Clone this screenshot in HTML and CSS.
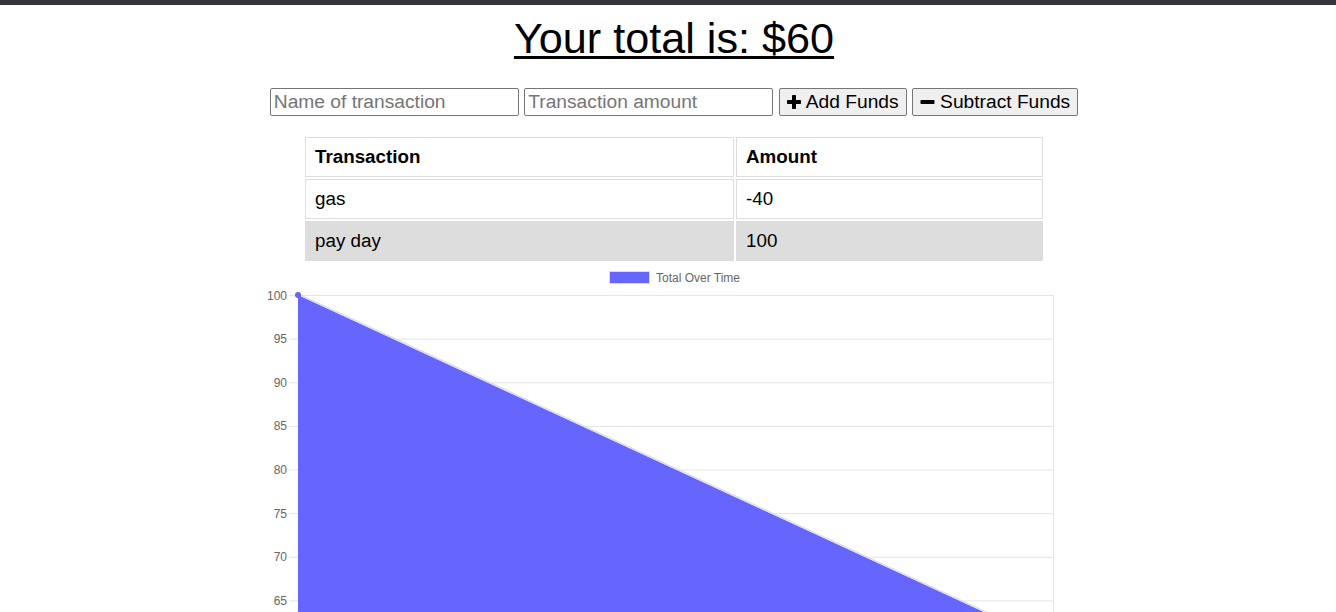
FILE: index.html
```html
<!DOCTYPE html>
<html lang="en">
<head>
<meta charset="utf-8">
<title>Budget Tracker</title>
<link rel="stylesheet" href="styles.css">
</head>
<body>
<div class="topbar"></div>
<main class="wrap">
  <h1 class="total">Your total is: $<span>60</span></h1>
  <form class="form">
    <input class="field" type="text" placeholder="Name of transaction">
    <input class="field" type="number" placeholder="Transaction amount">
    <button class="btn" type="button">
      <svg class="ico" viewBox="0 0 14 14" width="14" height="14"><rect x="5" y="0" width="4" height="14" rx="0.8"/><rect x="0" y="5" width="14" height="4" rx="0.8"/></svg>
      Add Funds
    </button>
    <button class="btn" type="button">
      <svg class="ico" viewBox="0 0 14 14" width="15" height="14"><rect x="0" y="5" width="14" height="4" rx="0.8"/></svg>
      Subtract Funds
    </button>
  </form>
  <table class="tx">
    <thead>
      <tr><th class="c1">Transaction</th><th class="c2">Amount</th></tr>
    </thead>
    <tbody>
      <tr><td>gas</td><td>-40</td></tr>
      <tr class="alt"><td>pay day</td><td>100</td></tr>
    </tbody>
  </table>
  <div class="chart">
    <svg width="820" height="420" viewBox="0 0 820 420" font-family="Liberation Sans, Arial, sans-serif" font-size="12" fill="#666">
      <rect x="359.5" y="5.5" width="40" height="12" fill="#6666ff" stroke="#dcdcf0" stroke-width="1"/>
      <text x="406" y="15.5">Total Over Time</text>
      <g stroke="#e5e5e5" stroke-width="1">
        <line x1="39" y1="29.5" x2="803" y2="29.5"/>
        <line x1="39" y1="73.1" x2="803" y2="73.1"/>
        <line x1="39" y1="116.8" x2="803" y2="116.8"/>
        <line x1="39" y1="160.4" x2="803" y2="160.4"/>
        <line x1="39" y1="204" x2="803" y2="204"/>
        <line x1="39" y1="247.6" x2="803" y2="247.6"/>
        <line x1="39" y1="291.3" x2="803" y2="291.3"/>
        <line x1="39" y1="334.9" x2="803" y2="334.9"/>
        <line x1="39" y1="378.5" x2="803" y2="378.5"/>
        <line x1="803.5" y1="29" x2="803.5" y2="420"/>
        <line x1="48.5" y1="29" x2="48.5" y2="420"/>
      </g>
      <g text-anchor="end">
        <text x="37" y="33.5">100</text>
        <text x="37" y="77.1">95</text>
        <text x="37" y="120.8">90</text>
        <text x="37" y="164.4">85</text>
        <text x="37" y="208">80</text>
        <text x="37" y="251.6">75</text>
        <text x="37" y="295.3">70</text>
        <text x="37" y="338.9">65</text>
      </g>
      <polygon points="48,29 803,378 803,420 48,420" fill="#6666ff"/>
      <line x1="48" y1="28" x2="803" y2="377" stroke="#dedee8" stroke-width="1.6"/>
      <circle cx="48" cy="29" r="3" fill="#6666ff"/>
    </svg>
  </div>
</main>
</body>
</html>
```

FILE: styles.css
```css
html, body {
  margin: 0;
  padding: 0;
  overflow: hidden;
  background: #fff;
}
body {
  font-family: "Liberation Sans", Arial, sans-serif;
  color: #000;
}
.topbar {
  height: 5px;
  background: #35363a;
}
.wrap {
  padding-left: 12px;
  display: flex;
  flex-direction: column;
  align-items: center;
}
.total {
  margin: 9px 0 0;
  font-size: 43.2px;
  font-weight: normal;
  line-height: 49px;
  text-decoration: underline;
  text-decoration-thickness: 3px;
  text-underline-offset: 3px;
}
.form {
  margin-top: 25px;
  margin-left: 0;
  display: flex;
  gap: 5.5px;
  align-items: center;
}
.field {
  box-sizing: border-box;
  width: 249px;
  height: 28px;
  border: 1px solid #767676;
  border-radius: 2px;
  padding: 2px 3px;
  font-family: "Liberation Sans", Arial, sans-serif;
  font-size: 19.2px;
  color: #000;
  background: #fff;
  -moz-appearance: textfield;
}
.field::placeholder {
  color: #757575;
}
.field::-webkit-outer-spin-button,
.field::-webkit-inner-spin-button {
  -webkit-appearance: none;
  margin: 0;
}
.btn {
  box-sizing: border-box;
  height: 28px;
  display: flex;
  align-items: center;
  gap: 5px;
  padding: 0 7px;
  border: 1px solid #767676;
  border-radius: 2px;
  background: #efefef;
  font-family: "Liberation Sans", Arial, sans-serif;
  font-size: 19.2px;
  color: #000;
}
.ico {
  fill: #000;
  flex: none;
}
.tx {
  margin-top: 19px;
  margin-left: 0;
  width: 742px;
  border-collapse: separate;
  border-spacing: 2px;
  font-size: 18.8px;
}
.tx th,
.tx td {
  border: 1px solid #ddd;
  padding: 0 9px;
  height: 40px;
  box-sizing: border-box;
  text-align: left;
}
.tx th {
  font-weight: bold;
}
.tx .c1 {
  width: 429px;
}
.tx tr.alt td {
  background: #ddd;
}
.chart {
  margin-top: 3px;
  margin-left: -28px;
  width: 820px;
  height: 420px;
}
.chart svg {
  display: block;
}
```
